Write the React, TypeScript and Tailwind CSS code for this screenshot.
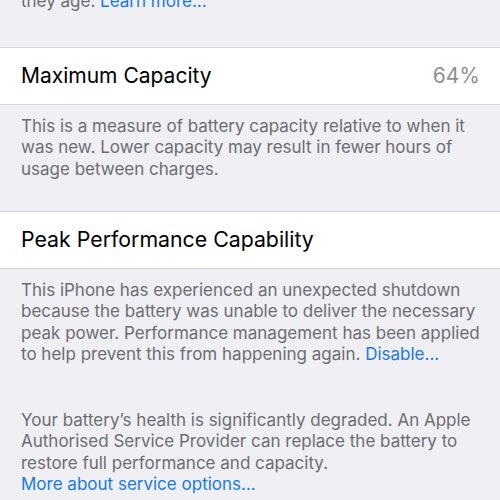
export default function App() {
  return (
    <main className="h-[500px] w-[500px] overflow-hidden bg-[#efeff4] font-['Inter','Liberation_Sans',sans-serif] antialiased">
      <p className="-mt-[9px] pl-[21px] pr-[10px] pb-[34px] text-[17px] leading-[21.5px] text-[#6d6d72]">
        they age. <span className="text-[#1a7ae0]">Learn more...</span>
      </p>

      <div className="flex h-[58px] items-center justify-between border-y border-[#d3d3d8] bg-white pl-[21px] pr-[20px] text-[21px]">
        <span className="text-black">Maximum Capacity</span>
        <span className="text-[#8e8e93]">64%</span>
      </div>

      <p className="pl-[21px] pr-[10px] pt-[11px] pb-[31px] text-[17px] leading-[21.5px] text-[#6d6d72]">
        This is a measure of battery capacity relative to when it was new. Lower capacity may result in fewer hours of usage between charges.
      </p>

      <div className="flex h-[58px] items-center border-y border-[#d3d3d8] bg-white pl-[21px] text-[21.3px] text-black">
        Peak Performance Capability
      </div>

      <p className="pl-[21px] pr-[10px] pt-[11px] text-[17px] leading-[21.3px] text-[#6d6d72]">
        This iPhone has experienced an unexpected shutdown because the battery was unable to deliver the necessary peak power. Performance management has been applied to help prevent this from happening again.{" "}
        <span className="text-[#1a7ae0]">Disable...</span>
      </p>

      <p className="pl-[21px] pr-[10px] pt-[45px] text-[17px] leading-[21.3px] text-[#6d6d72]">
        Your battery’s health is significantly degraded. An Apple Authorised Service Provider can replace the battery to restore full performance and capacity.
        <br />
        <span className="text-[#1a7ae0]">More about service options...</span>
      </p>
    </main>
  );
}
